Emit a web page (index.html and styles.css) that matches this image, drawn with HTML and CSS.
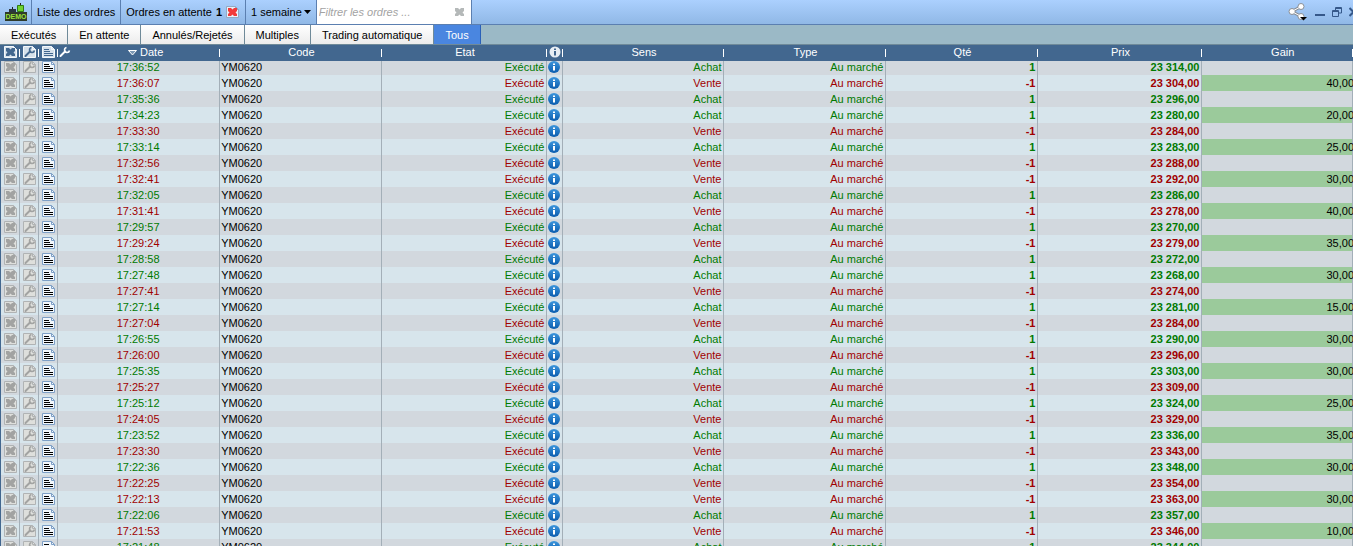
FILE: index.html
```html
<!DOCTYPE html>
<html lang="fr">
<head>
    <meta charset="UTF-8">
    <meta name="viewport" content="width=device-width, initial-scale=1.0">
    <title>Liste des ordres</title>
    <link rel="stylesheet" href="styles.css">
</head>
<body>
    <!-- Shared icons -->
    <svg class="sprite" aria-hidden="true">
        <symbol id="sheet" viewBox="0 0 13 12">
            <path d="M.5.5h9l3 3v8H.5z" fill="var(--paper)" stroke="var(--edge)"/>
            <path d="M9.5.5v3h3" fill="none" stroke="var(--edge)"/>
        </symbol>
        <symbol id="cross" viewBox="0 0 13 12">
            <path d="M2 2h3l1.5 1.5L8 2h3v3L9.500 6.500 11 8v2H8L6.500 8.500 5 10H2V8l1.500-1.500L2 5z" fill="var(--mark)"/>
        </symbol>
        <symbol id="wrench" viewBox="0 0 13 12">
            <path d="M2.500 10L7 5.500" fill="none" stroke="var(--mark)" stroke-width="2" stroke-linecap="round"/>
            <path d="M8.500 1.500A2.500 2.500 0 1 0 11.500 4.500" fill="none" stroke="var(--mark)" stroke-width="1.600"/>
        </symbol>
        <symbol id="lines" viewBox="0 0 13 12">
            <path d="M2 3.500h5M2 5.500h6M2 7.500h9M2 9.500h9" fill="none" stroke="var(--mark)"/>
        </symbol>
        <linearGradient id="blueDisc" x1="0" y1="0" x2="0" y2="1">
            <stop offset="0" stop-color="#3d96dc"/>
            <stop offset="1" stop-color="#0a5cae"/>
        </linearGradient>
    </svg>

    <div class="window">
        <header class="toolbar">
            <div class="tool logo">
                <svg width="24" height="18" viewBox="0 0 24 18">
                    <path d="M8.500 4v3M16.500 0v3" stroke="#222" fill="none"/>
                    <path d="M5 6h7v4H5z" fill="#2b3540"/>
                    <path d="M13.500 2.500h6v6h-6z" fill="#6fd32f" stroke="#2f7d12"/>
                    <path d="M1 9h22v9H1z" fill="#2f3b2b"/>
                    <text x="12" y="16" text-anchor="middle">DEMO</text>
                </svg>
            </div>
            <div class="tool">Liste des ordres</div>
            <div class="tool pending">
                Ordres en attente <b>1</b>
                <button class="icon-button" aria-label="Annuler tous les ordres">
                    <svg class="icon red-sheet"><use href="#sheet"/><use href="#cross"/></svg>
                </button>
            </div>
            <button class="tool period">1 semaine <svg width="7" height="4" viewBox="0 0 7 4"><path d="M0 0h7L3.500 4z"/></svg></button>
            <div class="filter">
                <input type="text" placeholder="Filtrer les ordres ..." aria-label="Filtrer les ordres">
                <button class="icon-button" aria-label="Effacer"><svg class="icon clear"><use href="#cross"/></svg></button>
            </div>
            <div class="window-buttons">
                <button class="icon-button" aria-label="Partager">
                    <svg width="20" height="18" viewBox="0 0 20 18">
                        <path d="M13 3.500L4 8.500l9 5" fill="none" stroke="#8a8f96" stroke-width="3"/>
                        <g fill="#fff" stroke="#8a8f96"><circle cx="13" cy="3.500" r="3"/><circle cx="4" cy="8.500" r="3"/><circle cx="13" cy="13.500" r="3"/></g>
                        <path d="M13 3.500L4 8.500l9 5" fill="none" stroke="#fff"/>
                        <path d="M12 14h7l-3.500 3.500z"/>
                    </svg>
                </button>
                <button class="icon-button" aria-label="Réduire"><svg width="10" height="10" viewBox="0 0 10 10"><path d="M0 7h10v2H0z" fill="#35588a"/></svg></button>
                <button class="icon-button" aria-label="Restaurer"><svg width="10" height="10" viewBox="0 0 10 10"><path d="M3.500 3V.500h6V6H7M3 1.500h6M.500 3.500h6v6h-6zM1 4.500h6" fill="none" stroke="#35588a"/></svg></button>
                <button class="icon-button" aria-label="Fermer"><svg width="9" height="10" viewBox="0 0 9 10"><path d="M.500 1l8 8M8.500 1l-8 8" fill="none" stroke="#35588a" stroke-width="2"/></svg></button>
            </div>
        </header>

        <nav class="tabs">
            <button>Exécutés</button>
            <button>En attente</button>
            <button>Annulés/Rejetés</button>
            <button>Multiples</button>
            <button>Trading automatique</button>
            <button class="active">Tous</button>
        </nav>

        <div class="orders">
            <table>
                <colgroup>
                    <col class="col-tool"><col class="col-tool"><col class="col-tool">
                    <col class="col-date"><col class="col-code"><col class="col-state"><col class="col-info">
                    <col class="col-side"><col class="col-type"><col class="col-qty"><col class="col-price"><col class="col-gain">
                </colgroup>
                <thead>
                    <tr>
                        <th><svg class="icon head-sheet"><use href="#sheet"/><use href="#cross"/></svg></th>
                        <th><svg class="icon head-sheet"><use href="#sheet"/><use href="#wrench"/></svg></th>
                        <th><svg class="icon head-sheet"><use href="#sheet"/><use href="#lines"/></svg></th>
                        <th>
                            <div class="date-head">
                                <svg class="icon head-wrench"><use href="#wrench"/></svg>
                                <span><svg width="9" height="6" viewBox="0 0 9 6"><path d="M.500.500h8L4.500 5z" fill="#7d99b5" stroke="#fff"/></svg> Date</span>
                            </div>
                        </th>
                        <th>Code</th>
                        <th>Etat</th>
                        <th><svg class="disc" viewBox="0 0 12 12"><circle cx="6" cy="6" r="5.500" fill="#e8eef4"/><path d="M5 2.500h2v1.500H5zM5 5h2v4.500H5z" fill="#42678f"/></svg></th>
                        <th>Sens</th>
                        <th>Type</th>
                        <th>Qté</th>
                        <th>Prix</th>
                        <th class="gain-head">Gain</th>
                    </tr>
                </thead>
                <tbody id="orderRows"></tbody>
            </table>
        </div>
    </div>

    <script>
        // time, side (A = achat, V = vente), price, gain
        const orders = [
            ['17:36:52', 'A', '23 314,00', ''],
            ['17:36:07', 'V', '23 304,00', '40,00'],
            ['17:35:36', 'A', '23 296,00', ''],
            ['17:34:23', 'A', '23 280,00', '20,00'],
            ['17:33:30', 'V', '23 284,00', ''],
            ['17:33:14', 'A', '23 283,00', '25,00'],
            ['17:32:56', 'V', '23 288,00', ''],
            ['17:32:41', 'V', '23 292,00', '30,00'],
            ['17:32:05', 'A', '23 286,00', ''],
            ['17:31:41', 'V', '23 278,00', '40,00'],
            ['17:29:57', 'A', '23 270,00', ''],
            ['17:29:24', 'V', '23 279,00', '35,00'],
            ['17:28:58', 'A', '23 272,00', ''],
            ['17:27:48', 'A', '23 268,00', '30,00'],
            ['17:27:41', 'V', '23 274,00', ''],
            ['17:27:14', 'A', '23 281,00', '15,00'],
            ['17:27:04', 'V', '23 284,00', ''],
            ['17:26:55', 'A', '23 290,00', '30,00'],
            ['17:26:00', 'V', '23 296,00', ''],
            ['17:25:35', 'A', '23 303,00', '30,00'],
            ['17:25:27', 'V', '23 309,00', ''],
            ['17:25:12', 'A', '23 324,00', '25,00'],
            ['17:24:05', 'V', '23 329,00', ''],
            ['17:23:52', 'A', '23 336,00', '35,00'],
            ['17:23:30', 'V', '23 343,00', ''],
            ['17:22:36', 'A', '23 348,00', '30,00'],
            ['17:22:25', 'V', '23 354,00', ''],
            ['17:22:13', 'V', '23 363,00', '30,00'],
            ['17:22:06', 'A', '23 357,00', ''],
            ['17:21:53', 'V', '23 346,00', '10,00'],
            ['17:21:48', 'A', '23 344,00', '']
        ];

        const info = '<svg class="disc" viewBox="0 0 12 12"><circle cx="6" cy="6" r="6" fill="url(#blueDisc)"/><path d="M5 2.500h2v1.500H5zM5 5h2v4.500H5z" fill="#fff"/></svg>';

        // Page icon with a mark on it
        function sheet(mark, look) {
            return `<svg class="icon ${look}"><use href="#sheet"/><use href="#${mark}"/></svg>`;
        }

        document.getElementById('orderRows').innerHTML = orders.map(([time, side, price, gain]) => {
            const buy = side === 'A';
            return `
                <tr class="${buy ? 'buy' : 'sell'}">
                    <td class="action">${sheet('cross', 'off-sheet')}</td>
                    <td class="action">${sheet('wrench', 'off-sheet')}</td>
                    <td class="action">${sheet('lines', 'on-sheet')}</td>
                    <td class="center">${time}</td>
                    <td class="code">YM0620</td>
                    <td>Exécuté</td>
                    <td>${info}</td>
                    <td>${buy ? 'Achat' : 'Vente'}</td>
                    <td>Au marché</td>
                    <td class="strong">${buy ? '1' : '-1'}</td>
                    <td class="strong">${price}</td>
                    <td class="gain${gain ? ' won' : ''}"><span>${gain}</span></td>
                </tr>`;
        }).join('');
    </script>
</body>
</html>
```
FILE: styles.css
```css
* {
    box-sizing: border-box;
}

body {
    margin: 0;
    font-family: "Liberation Sans", Arial, sans-serif;
    font-size: 11px;
    color: #000;
    overflow: hidden;
}

button, input {
    font: inherit;
    color: inherit;
}

.sprite {
    position: absolute;
    width: 0;
    height: 0;
}

.window {
    display: flex;
    flex-direction: column;
    height: 100vh;
    background-color: #9bb9c6;
}

/* Toolbar */
.toolbar {
    display: flex;
    flex: none;
    height: 25px;
    background: linear-gradient(#abd0fe, #90b8e6);
    border-bottom: 1px solid #5b7fb0;
}

.tool {
    display: flex;
    align-items: center;
    gap: 4px;
    padding: 0 5px;
    border: 0;
    border-right: 1px solid #5b7fb0;
    background: none;
    white-space: nowrap;
}

.logo {
    padding: 0 3px 0 4px;
}

.logo text {
    fill: #9be23c;
    font-size: 7px;
    font-weight: bold;
}

.pending {
    padding-right: 6px;
}

.period {
    gap: 2px;
}

.icon-button {
    display: flex;
    padding: 0;
    border: 0;
    background: none;
}

.icon {
    display: block;
    width: 13px;
    height: 12px;
}

.filter {
    display: flex;
    align-items: center;
    width: 155px;
    padding: 0 5px 0 2px;
    background-color: #fff;
    border-right: 1px solid #5b7fb0;
}

.filter input {
    flex: 1;
    min-width: 0;
    padding: 0;
    border: 0;
    outline: none;
}

.filter input::placeholder {
    color: #a3a3a3;
    font-style: italic;
}

.window-buttons {
    display: flex;
    align-items: center;
    gap: 7px;
    margin-left: auto;
    margin-right: -5px;
}

/* Tabs */
.tabs {
    display: flex;
    flex: none;
    height: 20px;
    border-bottom: 1px solid #6f8a99;
}

.tabs button {
    padding: 0 11px;
    border: 0;
    border-right: 1px solid #6f8a99;
    background: linear-gradient(#fff, #ececec);
}

.tabs .active {
    background: #4a86e0;
    border-color: #2a60b8;
    color: #fff;
}

/* Orders */
.orders {
    flex: 1;
    min-height: 0;
    overflow: hidden;
    border-left: 1px solid #42678f;
}

table {
    width: 100%;
    table-layout: fixed;
    border-collapse: separate;
    border-spacing: 0;
}

.col-tool { width: 19px; }
.col-date { width: 12%; }
.col-code { width: 12%; }
.col-state { width: 165px; }
.col-info { width: 16px; }
.col-side { width: 161px; }
.col-type { width: 162px; }
.col-qty { width: 152px; }
.col-price { width: 164px; }

th {
    height: 16px;
    padding: 0 0 2px;
    background: linear-gradient(#fff, #fff) right 4px / 1px 8px no-repeat #42678f;
    color: #fff;
    font-weight: normal;
    line-height: 14px;
}

th > svg,
td > svg {
    display: block;
    margin: 0 auto;
}

.date-head {
    display: grid;
    grid-template-columns: 13px 1fr;
    align-items: center;
}

.gain-head {
    padding-left: 10px;
}

td {
    height: 16px;
    padding: 0 2px 0 1px;
    border-right: 1px solid #a3afb8;
    line-height: 16px;
    text-align: right;
    white-space: nowrap;
}

/* First row is tucked slightly under the header */
tbody tr:first-child td {
    height: 14px;
    line-height: 12px;
    vertical-align: top;
}

tbody tr:nth-child(odd) {
    background-color: #d2d8de;
}

tbody tr:nth-child(even) {
    background-color: #d7e5ec;
}

.buy { color: #007a00; }
.sell { color: #a00000; }

td.action {
    padding: 0;
}

td.center {
    text-align: center;
}

td.code {
    color: #000;
    text-align: left;
}

.strong {
    font-weight: bold;
}

td.gain {
    color: #000;
}

.gain span {
    margin-right: -4px;
}

.won {
    background-color: #9bca9b;
}

.disc {
    width: 12px;
    height: 12px;
}

/* Icon colours */
.head-sheet {
    --paper: #d5e0ea;
    --edge: #f4f8fb;
    --mark: #42678f;
}

.head-wrench {
    --mark: #fff;
}

.off-sheet {
    --paper: #dedfdc;
    --edge: #b0b3b4;
    --mark: #a2a3a2;
}

.on-sheet {
    --paper: #f2f7fc;
    --edge: #7d9fc6;
    --mark: #000;
}

.red-sheet {
    --paper: #e9f0f8;
    --edge: #93a9c2;
    --mark: #f23a3a;
}

.clear {
    --mark: #b5b9b9;
}
```
